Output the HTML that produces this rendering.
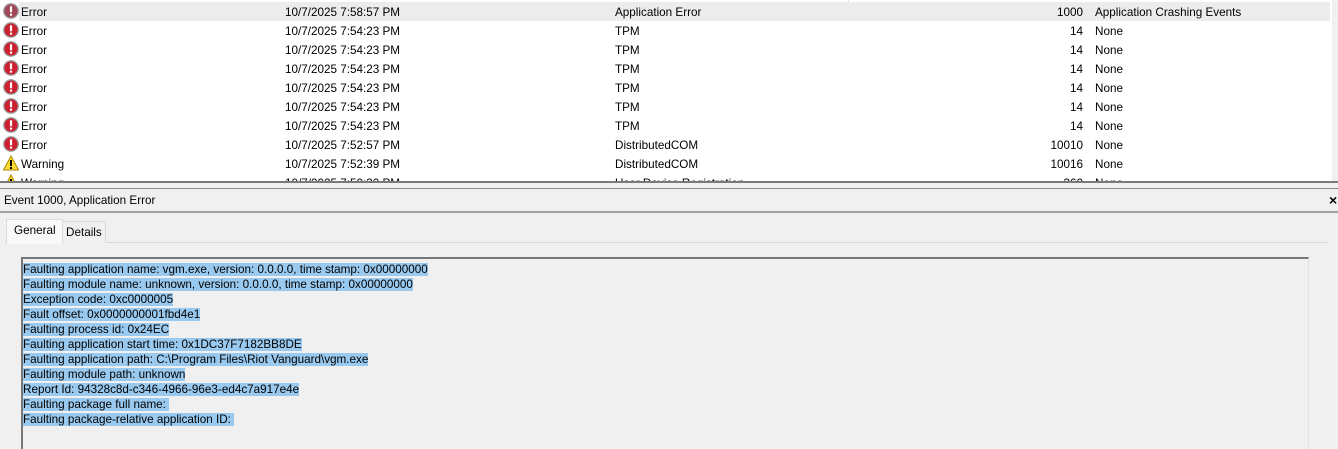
<!DOCTYPE html>
<html><head><style>
body{margin:0;width:1338px;height:440px;overflow:hidden;background:#f0f0f0;font-family:"Liberation Sans",sans-serif;font-size:11.7px;color:#000;position:relative}
.list{position:absolute;left:0;top:0;width:1338px;height:181px;background:#fff;overflow:hidden}
.row{position:absolute;left:0;height:19px;width:1330px;line-height:19px}
.row.sel{background:#ececec;left:19px;width:1311px}
.t{position:absolute;white-space:nowrap}
.ic{position:absolute;left:3px;width:16px;height:16px}
.sb{position:absolute;right:0;top:0;width:6px;height:181px;background:#f0f0f0}
.sel-text span{background:#99c9ef}
</style></head><body>
<div class="list">
<div class="t" style="left:848px;top:0;width:1px;height:4px;background:#e5e5e5"></div>
<div class="row sel" style="top:2px"></div>
<div id="rows"></div>
<div class="sb"></div>
</div>
<script>
var d=[["e","Error","10/7/2025 7:58:57 PM","Application Error","1000","Application Crashing Events"],
["e","Error","10/7/2025 7:54:23 PM","TPM","14","None"],
["e","Error","10/7/2025 7:54:23 PM","TPM","14","None"],
["e","Error","10/7/2025 7:54:23 PM","TPM","14","None"],
["e","Error","10/7/2025 7:54:23 PM","TPM","14","None"],
["e","Error","10/7/2025 7:54:23 PM","TPM","14","None"],
["e","Error","10/7/2025 7:54:23 PM","TPM","14","None"],
["e","Error","10/7/2025 7:52:57 PM","DistributedCOM","10010","None"],
["w","Warning","10/7/2025 7:52:39 PM","DistributedCOM","10016","None"],
["w","Warning","10/7/2025 7:50:30 PM","User Device Registration","360","None"]];
var h="";
d.forEach(function(r,i){var y=2+19*i;var ty=y+1;
var ic=r[0]=="e"?'<svg class="ic" style="top:'+(y+1)+'px" viewBox="0 0 16 16"><circle cx="8" cy="8" r="7.2" fill="'+(i==0?'#a04858':'#cc2030')+'" stroke="#9a9a9a" stroke-width="1.3"/><rect x="6.9" y="3.3" width="2.2" height="6" fill="#fff"/><rect x="6.9" y="10.6" width="2.2" height="2.1" fill="#fff"/></svg>'
:'<svg class="ic" style="top:'+(y+1)+'px" viewBox="0 0 16 16"><path d="M8 1L15.5 15H.5Z" fill="#fd3" stroke="#a80" stroke-width="1"/><rect x="7" y="5" width="2" height="6" fill="#000"/><rect x="7" y="12" width="2" height="2" fill="#000"/></svg>';
h+=ic+'<div class="t" style="left:21px;top:'+ty+'px;line-height:19px">'+r[1]+'</div><div class="t" style="left:285px;top:'+ty+'px;line-height:19px">'+r[2]+'</div><div class="t" style="left:615px;top:'+ty+'px;line-height:19px">'+r[3]+'</div><div class="t" style="right:255px;top:'+ty+'px;line-height:19px">'+r[4]+'</div><div class="t" style="left:1095px;top:'+ty+'px;line-height:19px">'+r[5]+'</div>';});
document.getElementById("rows").innerHTML=h;
</script>
<div style="position:absolute;left:0;top:181px;width:1338px;height:2px;background:#7a7a7a"></div>
<div style="position:absolute;left:0;top:188px;width:1338px;height:1px;background:#8a8a8a"></div>
<div class="t" style="left:4px;top:194px">Event 1000, Application Error</div>
<div class="t" style="left:1329px;top:192px;font-weight:bold;font-size:14px">×</div>
<div style="position:absolute;left:0;top:211px;width:1338px;height:2px;background:#a0a0a0"></div>
<div style="position:absolute;left:9px;top:242px;width:1320px;height:198px;border-top:1px solid #dadada;background:#f0f0f0"></div>
<div style="position:absolute;left:61px;top:221px;width:43px;height:21px;border:1px solid #dadada;border-bottom:none;background:#f0f0f0"></div>
<div class="t" style="left:66px;top:226px">Details</div>
<div style="position:absolute;left:6px;top:219px;width:55px;height:24px;border:1px solid #dadada;border-bottom:none;background:#f9f9f9"></div>
<div class="t" style="left:14px;top:224px">General</div>
<div style="position:absolute;left:21px;top:257px;width:1285px;height:190px;border-left:2px solid #777;border-top:2px solid #777;border-right:1px solid #e0e0e0;background:#f0f0f0"></div>
<div class="sel-text" style="position:absolute;left:23px;top:262px;line-height:15px;white-space:pre"><span>Faulting application name: vgm.exe, version: 0.0.0.0, time stamp: 0x00000000</span>
<span>Faulting module name: unknown, version: 0.0.0.0, time stamp: 0x00000000</span>
<span>Exception code: 0xc0000005</span>
<span>Fault offset: 0x0000000001fbd4e1</span>
<span>Faulting process id: 0x24EC</span>
<span>Faulting application start time: 0x1DC37F7182BB8DE</span>
<span>Faulting application path: C:\Program Files\Riot Vanguard\vgm.exe</span>
<span>Faulting module path: unknown</span>
<span>Report Id: 94328c8d-c346-4966-96e3-ed4c7a917e4e</span>
<span>Faulting package full name: </span>
<span>Faulting package-relative application ID: </span></div>
</body></html>
